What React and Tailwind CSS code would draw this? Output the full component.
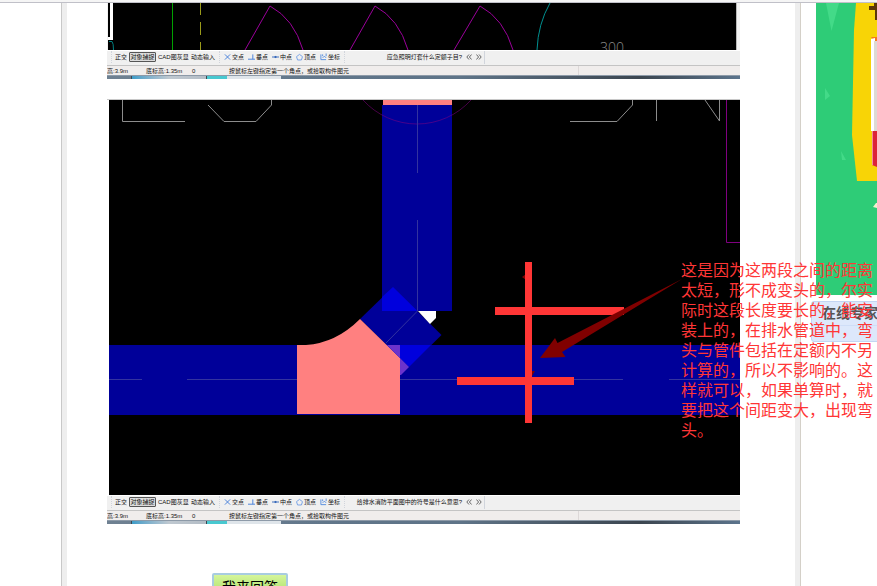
import React from 'react';

const snaps = [
    {
        label: '交点',
        icon: <path d="M1 1 L7 7 M7 1 L1 7" stroke="#3a78d8" />,
    },
    {
        label: '垂点',
        icon: <path d="M0 6.5 H8 M5.5 1 V6.5" stroke="#3a78d8" />,
    },
    {
        label: '中点',
        icon: <path d="M0 4 H8 M2.5 4 H5.5 M4 2.8 V5.2" stroke="#2f62b8" />,
    },
    {
        label: '顶点',
        icon: <path d="M4 1 L7.4 3.6 L6.2 7.4 H1.8 L0.6 3.6 Z" stroke="#6a9ae6" />,
    },
    {
        label: '坐标',
        icon: <path d="M1 1 V7 H7 M3 1 V3 M3 5 L5 3 L7 5 M7 0 V3" stroke="#4c86dc" />,
    },
];

const Toolbar = ({ question }) => (
    <div className="flex h-[15px] items-center border-t border-white bg-[#f0f0f0] pb-[2px] pl-1 text-[6px] leading-[8px] whitespace-nowrap text-[#111]">
        <span className="h-3 border-l border-dotted border-gray-300" />
        <button className="ml-[2px] w-[14px]">正交</button>
        <button className="ml-[1px] h-[10px] w-[27px] rounded-[1px] border border-[#555] bg-[#dcdcdc]">
            对象捕捉
        </button>
        <button className="ml-[2px] w-[29px]">CAD图灰显</button>
        <button className="ml-1 w-6">动态输入</button>
        <span className="ml-1 h-3 border-l border-dotted border-gray-300" />
        <div className="flex gap-1 pl-1">
            {snaps.map((snap) => (
                <button key={snap.label} className="flex w-5 items-center justify-between">
                    <svg viewBox="0 0 8 8" className="h-2 w-[7px]" fill="none">
                        {snap.icon}
                    </svg>
                    {snap.label}
                </button>
            ))}
        </div>
        <span className="ml-1 h-3 border-l border-dotted border-gray-300" />
        <div className="flex h-[13px] w-[140px] items-center justify-end gap-1 border-r border-gray-300 pr-[2px]">
            <span>{question}</span>
            <button aria-label="上一条">
                <svg viewBox="0 0 6 6" className="h-[6px] w-[6px]" fill="none" stroke="#444" strokeWidth="0.8">
                    <path d="M3 0.5 L0.8 3 L3 5.5 M5.6 0.5 L3.4 3 L5.6 5.5" />
                </svg>
            </button>
            <button aria-label="下一条">
                <svg viewBox="0 0 6 6" className="h-[6px] w-[6px]" fill="none" stroke="#444" strokeWidth="0.8">
                    <path d="M0.4 0.5 L2.6 3 L0.4 5.5 M3 0.5 L5.2 3 L3 5.5" />
                </svg>
            </button>
        </div>
    </div>
);

const StatusBar = () => (
    <div className="flex h-[10px] items-center border-t border-[#c4c4c4] bg-[#f0edec] text-[6px] leading-[8px] whitespace-nowrap text-[#111]">
        <span className="w-[39px]">高:3.9m</span>
        <span className="w-[46px]">底标高:1.35m</span>
        <span className="w-[37px]">0</span>
        <span>按鼠标左键指定第一个角点，或拾取构件图元</span>
        <span className="ml-auto h-full w-[162px] border-l border-[#ddd8d8]" />
    </div>
);

const Taskbar = () => (
    <div className="flex h-1 border-t border-[#8d9aa8] bg-gradient-to-r from-[#6f8192] via-[#5d7388] to-[#4d6074]">
        <span className="w-[25px] border-r border-[#3c4650]" />
        <span className="w-[75px] border-r border-[#3c4650] bg-gradient-to-r from-[#3c9cc8] via-[#bfc8d0] to-[#b4bdc6]" />
        <span className="w-5 bg-[#48c8d0]" />
        <span className="w-[54px] bg-[#dfe5ea]" />
        <span className="flex-1 bg-gradient-to-r from-transparent via-[#5f7488] to-[#3c4650]" />
        <span className="w-[100px] bg-gradient-to-r from-[#3c4650] to-[#5c748c]" />
    </div>
);

const Screenshot = ({ question, children }) => (
    <figure className="overflow-hidden">
        {children}
        <Toolbar question={question} />
        <StatusBar />
        <Taskbar />
    </figure>
);

// Floor plan with door swings
const FloorPlan = () => (
    <svg viewBox="107 3 633 47" preserveAspectRatio="xMinYMin slice" className="block h-[47px] w-full" fill="none">
        <rect x="107" y="3" width="633" height="47" fill="#f2f2f2" />
        <rect x="108" y="3" width="628" height="47" fill="#000" />
        <path d="M736.5 3 V50" stroke="#b8b8b8" />
        <path d="M109 3 H113 V40 H108 V37 H110 V3 Z" fill="#fff" />
        <path d="M109 41.5 H112 Q113.5 43 113.5 50" stroke="#008080" />
        <path d="M172.5 3 V50" stroke="#00a000" />
        <path d="M200.5 3 V15 M200.5 22 V35 M200.5 42 V50" stroke="#9a9a1a" />
        <g stroke="#9a009a">
            <path d="M245 50 L270 6 Q294 19 303 50" />
            <path d="M350 50 L375 6 Q399 19 408 50" />
            <path d="M454 50 L480 6 Q504 19 513 50" />
        </g>
        <path d="M550 3 Q538 24 537 50" stroke="#009090" />
        <text x="600" y="53" fill="#8a8a8a" fontSize="14" fontFamily="Open Sans, sans-serif" fontWeight="300">
            300
        </text>
    </svg>
);

// Drain pipe elbow with the short segment marked in red
const PipePlan = () => (
    <svg viewBox="107 99 633 396" preserveAspectRatio="xMinYMin slice" className="block h-[396px] w-full" fill="none">
        <rect x="107" y="99" width="633" height="396" fill="#fff" />
        <path d="M107 99.5 H740" stroke="#c8c8c8" />
        <rect x="109" y="100" width="631" height="395" fill="#000" />
        <path
            d="M122.5 100 V121.5 H185 M208 105 L224 121.5 H256 L271.5 105 V100 M570 121.5 H617 L632.5 105 V100 M656.5 100 V121 M705 100 L719.5 121 V100"
            stroke="#8c8c8c"
        />
        <path d="M726.5 100 V242.5 H740" stroke="#800080" />
        <rect x="383" y="100" width="69" height="5" fill="#ff8080" />
        <g fill="#000099">
            <rect x="382" y="105" width="70" height="206" />
            <rect x="109" y="345" width="631" height="70" />
            <path d="M393 287 L441.5 335 L409 367 L360 319 Z" />
        </g>
        <path d="M363 100 A72.75 72.75 0 0 0 471 100" stroke="#800080" strokeOpacity="0.55" />
        <path d="M382 297 L393 287 L417.5 311 H382 Z M387 345 H431 L409 367 Z" fill="#0000dd" />
        <path d="M418 311 H436 V318 L430 324 Z" fill="#fff" />
        <path d="M297 345 H306 Q336 343 360 319 L400 358 V414 H297 Z" fill="#ff8080" />
        <path d="M387 345 H400 V358 Z M400 358 L409 367 L401 375 H400 Z" fill="#6b33cc" />
        <path
            d="M417.5 105 V173 M417.5 220 V311 L386 343 M142 379.5 H109 M187 379.5 H297 M400 379.5 H457 M574 379.5 H623 M669 379.5 H740"
            stroke="#33339f"
        />
        <path d="M522 277 L526 274 V280 Z M531 371 H535 L532 376 Z" fill="#800000" />
        <g fill="#ff3636">
            <rect x="525" y="262" width="7" height="161" />
            <rect x="495" y="307" width="129" height="8" />
            <rect x="457" y="377" width="117" height="8" />
        </g>
        <path d="M540 358 L555 338 L557.5 343 L682 279 L562 352 L565.5 357 Z" fill="#800000" />
    </svg>
);

const Banner = () => (
    <svg viewBox="816 3 61 292" preserveAspectRatio="xMinYMin slice" className="ml-[15px] block h-[292px]">
        <rect x="816" y="3" width="61" height="292" fill="#2ecc77" />
        <path d="M826 3 H839 L831.5 31 Z M825 88 L830 96 L825 100 Z M841 151 L846 160 L842 160 Z" fill="#43da88" />
        <path d="M856 3 H877 V181 H857 L852 135 L854 30 Z" fill="#f8d406" />
        <path d="M869 6 H874 V3 H877 V20 H875 V10 H869 Z" fill="#5a3708" />
        <path d="M871 37 H877 V41 H874 Z" fill="#f47a20" />
        <path d="M871 39 L875 38 V131 H871 Z" fill="#fff" />
        <path d="M874 41 H877 V131 H874 Z" fill="#dedad6" />
        <path d="M872 131 H877 V167 L872 165 Z" fill="#dc2438" />
        <path d="M872 131 H873 V165 H872 Z" fill="#f58a98" />
        <path d="M873 207 L876 203 H877 V208 Z" fill="#f4f0d0" />
    </svg>
);

export default function App() {
    return (
        <div className="relative flex h-screen flex-col overflow-hidden bg-white font-['Liberation_Sans','Noto_Sans_CJK_SC',sans-serif]">
            <header className="h-[3px] shrink-0 border-b border-[#c0c0c8] bg-[#f5f5f5]" />

            <div className="flex min-h-0 flex-1">
                <div className="w-[62px] shrink-0 border-r border-[#c8c8c8]" />
                <main className="min-w-0 flex-1 border-x-5 border-[#eeeeee] pr-[55px] pl-10">
                    <Screenshot question="应急照明灯套什么定额子目?">
                        <FloorPlan />
                    </Screenshot>
                    <div className="h-5" />
                    <Screenshot question="给排水消防平面图中的符号是什么意思?">
                        <PipePlan />
                    </Screenshot>
                    <button className="mt-[49px] ml-[105px] h-7 w-[76px] rounded-[2px] border-2 border-[#a8cce0] bg-gradient-to-b from-[#d4f59a] to-[#a4dc5c] text-[14px] leading-[24px] whitespace-nowrap text-black">
                        我来回答
                    </button>
                </main>

                <aside className="w-[77px] shrink-0 overflow-hidden border-l border-[#d4d0c8]">
                    <Banner />
                    <section className="mt-[6px] ml-[10px] h-[41px] w-[120px] rounded-[3px] border border-[#c3d5f3] bg-[#dde8fb]">
                        <h2 className="h-6 border-b border-[#cfdef7] pl-[10px] text-[14px] leading-[22px] font-bold whitespace-nowrap text-[#555]">
                            在线专家
                        </h2>
                    </section>
                </aside>
            </div>

            <p className="absolute top-[261px] right-1 w-[192px] text-[16px] leading-[20px] text-[#ff3636]">
                这是因为这两段之间的距离太短，形不成变头的，尔实际时这段长度要长的，能安装上的，在排水管道中，弯头与管件包括在定额内不另计算的，所以不影响的。这样就可以，如果单算时，就要把这个间距变大，出现弯头。
            </p>
        </div>
    );
}
